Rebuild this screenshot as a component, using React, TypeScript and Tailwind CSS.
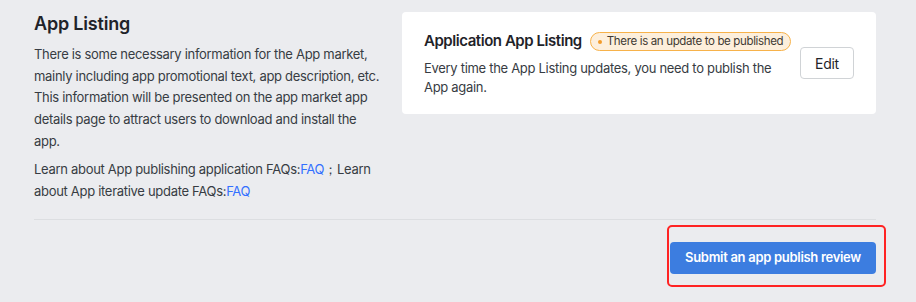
export default function App() {
  return (
    <div
      className="w-[916px] h-[302px] bg-[#ebecef] pl-[34px] pr-[40px] text-[#2b2f36] tracking-[-0.3px]"
      style={{ fontFamily: "Inter, 'Noto Sans', sans-serif" }}
    >
      <div className="flex justify-between">
        <div className="w-[348px] pt-[11px]">
          <h2 className="text-[18px] leading-[26px] font-semibold text-[#1f2329] tracking-[-0.2px]">App Listing</h2>
          <p className="mt-[7px] text-[13px] leading-[21.7px] text-[#373c43]">
            There is some necessary information for the App market, mainly including app promotional text, app
            description, etc. This information will be presented on the app market app details page to attract
            users to download and install the app.
          </p>
          <p className="mt-[5px] text-[13px] leading-[22.5px] text-[#373c43]">
            Learn about App publishing application FAQs:<a className="text-[#3370ff]">FAQ</a>；Learn about App
            iterative update FAQs:<a className="text-[#3370ff]">FAQ</a>
          </p>
        </div>

        <div className="mt-[12px] w-[474px] h-[102px] bg-white rounded-[4px] pl-[22px] pr-[22px] flex items-center justify-between">
          <div className="pt-[1px]">
            <div className="flex items-center gap-[8px] whitespace-nowrap">
              <span className="text-[15px] font-semibold text-[#1f2329] tracking-[-0.45px]">Application App Listing</span>
              <span className="flex items-center gap-[5px] h-[19px] px-[7px] rounded-full border border-[#f7b24a] bg-[#fdefdc] text-[11.5px] text-[#3f3a33] tracking-[-0.35px]">
                <span className="w-[4px] h-[4px] rounded-full bg-[#f29b2a]" />
                There is an update to be published
              </span>
            </div>
            <p className="mt-[6px] w-[360px] text-[13px] leading-[19px] text-[#373c43]">
              Every time the App Listing updates, you need to publish the App again.
            </p>
          </div>
          <button className="shrink-0 w-[54px] h-[32px] border border-[#d0d3d6] rounded-[4px] bg-white text-[14px] text-[#1f2329]">
            Edit
          </button>
        </div>
      </div>

      <div className="mt-[16px] border-t border-[#dcdee1]" />

      <div className="flex justify-end pt-[22px]">
        <button className="relative h-[32px] w-[206px] rounded-[4px] bg-[#3c7de0] text-white text-[13px] font-semibold">
          Submit an app publish review
          <span className="absolute -left-[3px] -right-[10px] -top-[17px] -bottom-[13px] border-2 border-[#ff2323] rounded-[5px]" />
        </button>
      </div>
    </div>
  );
}
